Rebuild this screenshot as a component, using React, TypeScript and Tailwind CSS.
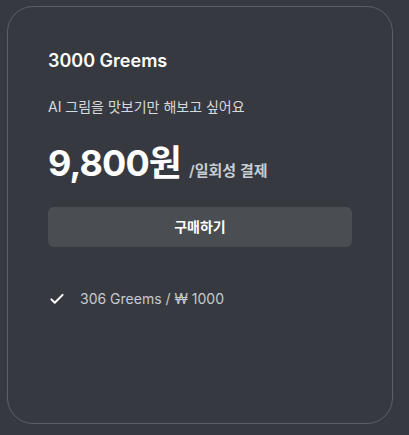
export default function App() {
  return (
    <div
      className="min-h-screen bg-[#363a40] pt-[6px] pl-[7px]"
      style={{ fontFamily: 'Inter, "Noto Sans CJK KR", sans-serif' }}
    >
      <div className="flex h-[418px] w-[386px] flex-col rounded-[26px] border border-[#5c6066] bg-[#363a40] px-10 pt-10">
        <h2 className="text-lg font-semibold leading-7 text-white">3000 Greems</h2>
        <p className="mt-[22px] text-sm leading-5 text-[#d6d9dd]">AI 그림을 맛보기만 해보고 싶어요</p>

        <div className="mt-[26px] flex items-baseline gap-2">
          <span className="text-4xl font-bold leading-10 tracking-tight text-white">9,800원</span>
          <span className="text-[15px] font-semibold text-[#c9cdd2]">/일회성 결제</span>
        </div>

        <button
          type="button"
          className="mt-6 h-10 w-full rounded-md bg-[#4a4e53] text-sm font-bold text-white"
        >
          구매하기
        </button>

        <ul className="mt-[42px] flex flex-col gap-3">
          <li className="flex items-center gap-[14px] text-sm leading-5 text-[#c6cacf]">
            <svg
              viewBox="0 0 24 24"
              className="h-[18px] w-[18px] text-white"
              fill="none"
              stroke="currentColor"
              strokeWidth={2.6}
              strokeLinecap="round"
              strokeLinejoin="round"
            >
              <path d="M4.5 12.5l4.5 4.5L19.5 6.5" />
            </svg>
            306 Greems / ₩ 1000
          </li>
        </ul>
      </div>
    </div>
  );
}
